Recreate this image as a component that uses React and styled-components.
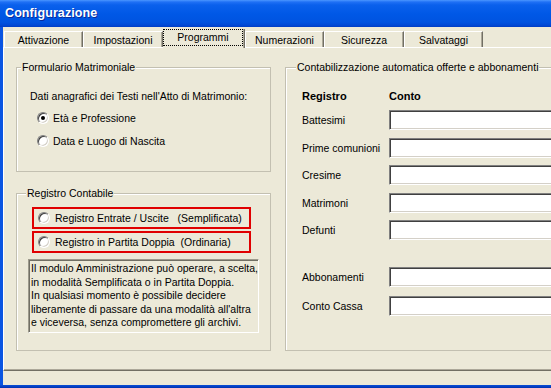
import React from "react";
import styled, { createGlobalStyle, css } from "styled-components";

const GlobalStyle = createGlobalStyle`
  html, body { margin: 0; padding: 0; background: #ECE9D8; overflow: hidden; }
  body { font-family: "Liberation Sans", Arial, sans-serif; font-size: 10.5px; color: #000; }
  * { box-sizing: border-box; }
`;

const Window = styled.div`
  width: 551px;
  height: 388px;
  display: flex;
  flex-direction: column;
  overflow: hidden;
  background: #ECE9D8;
`;

const TitleBar = styled.div`
  height: 27px;
  flex: none;
  display: flex;
  align-items: center;
  padding: 0 0 2px 5px;
  background: linear-gradient(
    to bottom,
    #4A96FF 0px,
    #1F70F5 2px,
    #0A60EC 5px,
    #0058E6 14px,
    #0053E0 22px,
    #0049D6 25px,
    #003CC4 27px
  );
  color: #fff;
  font-weight: bold;
  font-size: 12.5px;
  letter-spacing: 0.1px;
  text-shadow: 1px 1px 0 #0A2A9A;
`;

const Body = styled.div`
  flex: 1;
  display: flex;
  flex-direction: column;
  border-left: 3px solid #0A55E2;
`;

const BottomEdge = styled.div`
  height: 3px;
  flex: none;
  background: linear-gradient(to bottom, #0A4FD8, #0030B0);
`;

const TabStrip = styled.div`
  height: 20px;
  flex: none;
  display: flex;
  align-items: flex-end;
  padding-left: 1px;
`;

const Tab = styled.div`
  width: ${(p) => p.$w}px;
  height: 16px;
  flex: none;
  display: flex;
  align-items: center;
  justify-content: center;
  border-top: 1px solid #fff;
  border-left: 1px solid #fff;
  border-right: 1px solid #716F64;
  box-shadow: inset -1px 0 0 #ACA899;
  white-space: nowrap;
  ${(p) =>
    p.$active &&
    css`
      height: 19px;
      margin-bottom: -1px;
      position: relative;
      z-index: 1;
      background: #ECE9D8;
      border-top: none;
      border-left: none;
      align-items: flex-start;
    `}
`;

const FocusRing = styled.div`
  width: calc(100% - 1px);
  height: 17px;
  margin-right: 1px;
  border: 1px dotted #000;
  display: flex;
  align-items: center;
  justify-content: center;
  padding-bottom: 1px;
`;

const Page = styled.div`
  height: 324px;
  flex: none;
  display: flex;
  gap: 14px;
  padding: 19px 0 0 12px;
  border-top: 1px solid #fff;
  border-left: 1px solid #fff;
  border-bottom: 1px solid #716F64;
  box-shadow: inset 0 -1px 0 #ACA899;
`;

const Column = styled.div`
  display: flex;
  flex-direction: column;
  gap: 21px;
  flex: none;
`;

const Frame = styled.div`
  position: relative;
  flex: none;
  width: ${(p) => p.$w}px;
  height: ${(p) => p.$h}px;
  border: 1px solid #C3C0B1;
  box-shadow: inset 1px 1px 0 #fff;
  padding: ${(p) => p.$pad};
  display: flex;
  flex-direction: column;
`;

const Legend = styled.span`
  position: absolute;
  top: -7px;
  left: ${(p) => p.$left}px;
  padding: 0 1px;
  line-height: 13px;
  background: #ECE9D8;
  white-space: nowrap;
`;

const Line = styled.div`
  height: 14px;
  line-height: 14px;
  white-space: pre;
`;

const RadioRow = styled.label`
  display: flex;
  align-items: center;
  gap: ${(p) => p.$gap || 5}px;
  height: 22px;
  margin-left: ${(p) => p.$ml || 0}px;
  margin-top: ${(p) => p.$mt || 0}px;
  white-space: pre;
`;

const RadioDot = styled.span`
  width: 12px;
  height: 12px;
  flex: none;
  border-radius: 50%;
  background: #fff;
  border: 1px solid;
  border-color: #808080 #fff #fff #808080;
  box-shadow: inset 1px 1px 0 #404040, inset -1px -1px 0 #D4D0C8;
  display: flex;
  align-items: center;
  justify-content: center;
  &::after {
    content: "";
    width: 4px;
    height: 4px;
    border-radius: 50%;
    background: ${(p) => (p.$checked ? "#000" : "transparent")};
  }
`;

const Highlight = styled.div`
  width: 219px;
  height: 22px;
  margin: ${(p) => p.$mt || 0}px 0 0 15px;
  border: 2px solid #E00000;
  padding-left: 4px;
  display: flex;
  align-items: center;
`;

const InfoBox = styled.div`
  width: 231px;
  height: 74px;
  margin: 6px 0 0 11px;
  border: 1px solid;
  border-color: #9D9A8C #fff #fff #9D9A8C;
  box-shadow: inset 1px 1px 0 #716F64;
  padding: 2px 0 0 2px;
  line-height: 13.5px;
  white-space: nowrap;
  overflow: hidden;
`;

const GridRow = styled.div`
  display: grid;
  grid-template-columns: 87px 1fr;
  align-items: center;
  row-gap: ${(p) => p.$gap || 0}px;
  margin-top: ${(p) => p.$mt || 0}px;
`;

const HeadCell = styled.div`
  font-weight: bold;
  font-size: 11px;
  line-height: 14px;
`;

const FieldLabel = styled.div`
  white-space: nowrap;
  line-height: 14px;
`;

const TextBox = styled.input`
  height: 20px;
  width: 100%;
  margin: 0;
  padding: 0 3px;
  background: #fff;
  border: 1px solid;
  border-color: #808080 #fff #fff #808080;
  box-shadow: inset 1px 1px 0 #404040, inset -1px -1px 0 #D4D0C8;
  outline: none;
  font: inherit;
`;

const Rest = styled.div`
  flex: 1;
`;

const tabs = [
  { label: "Attivazione", w: 79 },
  { label: "Impostazioni", w: 80 },
  { label: "Programmi", w: 82, active: true },
  { label: "Numerazioni", w: 79 },
  { label: "Sicurezza", w: 80 },
  { label: "Salvataggi", w: 79 },
];

const fieldsA = ["Battesimi", "Prime comunioni", "Cresime", "Matrimoni", "Defunti"];
const fieldsB = ["Abbonamenti", "Conto Cassa"];

const infoLines = [
  "Il modulo Amministrazione può operare, a scelta,",
  "in modalità Semplificata o in Partita Doppia.",
  "In qualsiasi momento è possibile decidere",
  "liberamente di passare da una modalità all'altra",
  "e viceversa, senza compromettere gli archivi.",
];

export default function App() {
  return (
    <>
      <GlobalStyle />
      <Window>
        <TitleBar>Configurazione</TitleBar>
        <Body>
          <TabStrip>
            {tabs.map((t) => (
              <Tab key={t.label} $w={t.w} $active={t.active}>
                {t.active ? <FocusRing>{t.label}</FocusRing> : t.label}
              </Tab>
            ))}
          </TabStrip>
          <Page>
            <Column>
              <Frame $w={255} $h={105} $pad="21px 0 0 13px">
                <Legend $left={4}>Formulario Matrimoniale</Legend>
                <Line>Dati anagrafici dei Testi nell'Atto di Matrimonio:</Line>
                <RadioRow $ml={7} $mt={4} $gap={4}>
                  <RadioDot $checked />
                  Età e Professione
                </RadioRow>
                <RadioRow $ml={7} $mt={1} $gap={4}>
                  <RadioDot />
                  Data e Luogo di Nascita
                </RadioRow>
              </Frame>
              <Frame $w={255} $h={158} $pad="13px 0 0 0">
                <Legend $left={9}>Registro Contabile</Legend>
                <Highlight>
                  <RadioRow>
                    <RadioDot />
                    {"Registro Entrate / Uscite   (Semplificata)"}
                  </RadioRow>
                </Highlight>
                <Highlight $mt={2}>
                  <RadioRow>
                    <RadioDot />
                    {"Registro in Partita Doppia  (Ordinaria)"}
                  </RadioRow>
                </Highlight>
                <InfoBox>
                  {infoLines.map((l) => (
                    <div key={l}>{l}</div>
                  ))}
                </InfoBox>
              </Frame>
            </Column>
            <Frame $w={300} $h={284} $pad="21px 0 0 16px">
              <Legend $left={10}>Contabilizzazione automatica offerte e abbonamenti</Legend>
              <GridRow>
                <HeadCell>Registro</HeadCell>
                <HeadCell>Conto</HeadCell>
              </GridRow>
              <GridRow $mt={7} $gap={7.5}>
                {fieldsA.map((f) => (
                  <React.Fragment key={f}>
                    <FieldLabel>{f}</FieldLabel>
                    <TextBox />
                  </React.Fragment>
                ))}
              </GridRow>
              <GridRow $mt={27} $gap={8.5}>
                {fieldsB.map((f) => (
                  <React.Fragment key={f}>
                    <FieldLabel>{f}</FieldLabel>
                    <TextBox />
                  </React.Fragment>
                ))}
              </GridRow>
            </Frame>
          </Page>
          <Rest />
        </Body>
        <BottomEdge />
      </Window>
    </>
  );
}
